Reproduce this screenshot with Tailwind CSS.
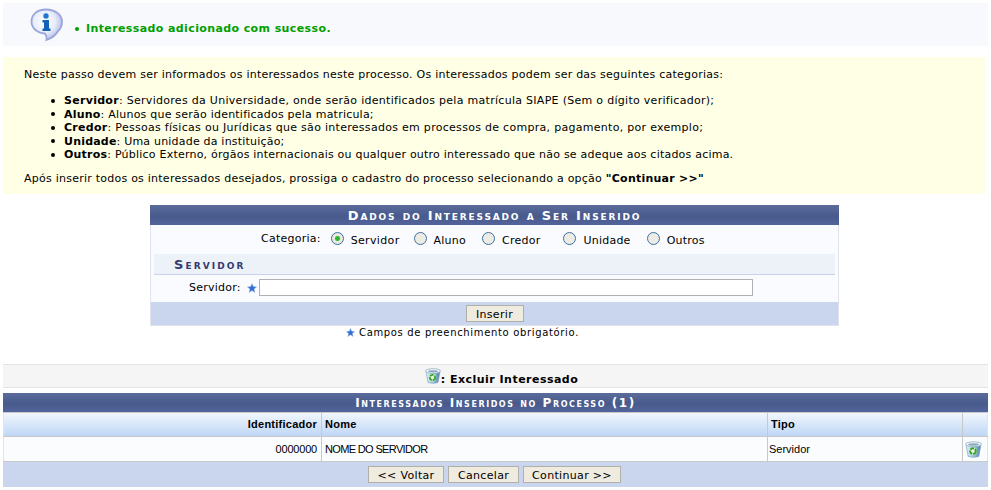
<!DOCTYPE html>
<html lang="pt-BR">
<head>
  <meta charset="UTF-8" />
  <title>Dados do Interessado</title>
  <script src="https://cdn.jsdelivr.net/npm/@tailwindcss/browser@4"></script>
</head>
<body class="bg-white text-black font-['DejaVu_Sans',sans-serif] text-[11px] leading-[13px] tracking-[.24px] overflow-hidden">
  <svg width="0" height="0" class="absolute">
    <defs>
      <symbol id="star" viewBox="0 0 10 10">
        <path d="M5 .5 6.3 3.6 9.6 3.9 7.1 6.1 7.9 9.4 5 7.6 2.1 9.4 2.9 6.1.4 3.9 3.7 3.6Z" fill="#2f6fd0" stroke="#9db8e0" stroke-width=".5"/>
      </symbol>
      <linearGradient id="binBody" x1="0" x2="1" y1="0" y2="0">
        <stop offset="0" stop-color="#e6f3fa"/><stop offset=".55" stop-color="#93c4e0"/><stop offset="1" stop-color="#4a7fa6"/>
      </linearGradient>
      <symbol id="bin" viewBox="0 0 16 16">
        <path d="M1 3.500 3 14.500Q8 16.200 13 14.500L15 3.500Z" fill="url(#binBody)" stroke="#7d9fb6" stroke-width=".6"/>
        <ellipse cx="8" cy="3" rx="7.500" ry="2.300" fill="#f0f7fb" stroke="#86a8be" stroke-width=".7"/>
        <ellipse cx="8" cy="3.300" rx="5" ry="1.100" fill="#8fa9bb"/>
        <circle cx="7.500" cy="9.500" r="3.700" fill="#e4f3e0"/>
        <circle cx="7.500" cy="9.500" r="2.700" fill="none" stroke="#35a324" stroke-width="1.800" stroke-dasharray="4 .8"/>
      </symbol>
    </defs>
  </svg>

  <div class="pt-[3px] pl-[3px] w-[988px]">
    <!-- mensagem de sucesso -->
    <div class="flex h-[43px] w-[985px] bg-[#f8f9fd] pl-[27px] pt-[5px]">
      <svg width="34" height="34" viewBox="0 0 34 34" class="shrink-0">
        <defs>
          <radialGradient id="bubble" cx=".42" cy=".4" r=".6">
            <stop offset="0" stop-color="#ffffff"/><stop offset=".6" stop-color="#e9ecfa"/><stop offset="1" stop-color="#b4bcea"/>
          </radialGradient>
        </defs>
        <path d="M16 1.500C7 1.500 1.500 6.500 1.500 13.500 1.500 20 7 25 15 25.500 16.500 27.500 17 29.500 16.500 32 22 30 26 27 28 23 30.500 21 32 17 32 13.500 32 6.500 25 1.500 16 1.500Z" fill="url(#bubble)" stroke="#9aa5da" stroke-width="1.800"/>
        <circle cx="16" cy="8" r="2.700" fill="#1f78cf"/>
        <path d="M12.500 12h6.500v8.500h1.500v2.500h-8v-2.500h1.500v-6h-1.500Z" fill="#1462b8"/>
      </svg>
      <ul class="ml-[11px] mt-[14px] font-bold text-[#00a000] tracking-[.39px]">
        <li class="flex items-center"><span class="mr-[7px] size-[4px] rounded-full bg-[#00a000]"></span>Interessado adicionado com sucesso.</li>
      </ul>
    </div>

    <!-- instrucoes -->
    <div class="mt-[11px] h-[137px] w-[983px] bg-[#ffffe6] pl-[21px] pt-[11px]">
      <p>Neste passo devem ser informados os interessados neste processo. Os interessados podem ser das seguintes categorias:</p>
      <ul class="mt-[13px] ml-[27px] flex flex-col leading-[13.5px]">
        <li class="flex items-center tracking-[.29px]"><span class="mr-[9px] size-[4px] rounded-full bg-black"></span><span><b>Servidor</b>: Servidores da Universidade, onde serão identificados pela matrícula SIAPE (Sem o dígito verificador);</span></li>
        <li class="flex items-center tracking-[.22px]"><span class="mr-[9px] size-[4px] rounded-full bg-black"></span><span><b>Aluno</b>: Alunos que serão identificados pela matricula;</span></li>
        <li class="flex items-center tracking-[.29px]"><span class="mr-[9px] size-[4px] rounded-full bg-black"></span><span><b>Credor</b>: Pessoas físicas ou Jurídicas que são interessados em processos de compra, pagamento, por exemplo;</span></li>
        <li class="flex items-center tracking-[.2px]"><span class="mr-[9px] size-[4px] rounded-full bg-black"></span><span><b>Unidade</b>: Uma unidade da instituição;</span></li>
        <li class="flex items-center tracking-[.22px]"><span class="mr-[9px] size-[4px] rounded-full bg-black"></span><span><b>Outros</b>: Público Externo, órgãos internacionais ou qualquer outro interessado que não se adeque aos citados acima.</span></li>
      </ul>
      <p class="mt-[10px]">Após inserir todos os interessados desejados, prossiga o cadastro do processo selecionando a opção <b>"Continuar &gt;&gt;"</b></p>
    </div>

    <!-- formulario -->
    <div class="ml-[147px] mt-[11px] w-[689px] border-x border-b border-[#dfe3ee]">
      <div class="-mx-px h-[20px] bg-[linear-gradient(#5b6c9c,#485a8c_55%,#52649a)] text-center text-[13px] leading-[21px] font-bold text-white tracking-[1.83px] [font-variant:small-caps]">Dados do Interessado a Ser Inserido</div>
      <div class="bg-[#f9fbfe]">
        <div class="flex h-[29px] items-center pl-[110px]">
          <span class="mr-[10px] -mt-[2px]">Categoria:</span>
          <span class="size-[13px] rounded-full border border-[#3f6f9f] bg-[radial-gradient(circle,#2eb82e_0_2px,#e8e8e0_3px)] -mt-[2px]"></span>
          <span class="ml-[7px] mr-[14px] mt-[2px] tracking-[.35px]">Servidor</span>
          <span class="size-[13px] rounded-full border border-[#3f6f9f] bg-[#ecece4] -mt-[2px]"></span>
          <span class="ml-[7px] mr-[16px] mt-[2px]">Aluno</span>
          <span class="size-[13px] rounded-full border border-[#3f6f9f] bg-[#ecece4] -mt-[2px]"></span>
          <span class="ml-[7px] mr-[23px] mt-[2px]">Credor</span>
          <span class="size-[13px] rounded-full border border-[#3f6f9f] bg-[#ecece4] -mt-[2px]"></span>
          <span class="ml-[7px] mr-[16px] mt-[2px]">Unidade</span>
          <span class="size-[13px] rounded-full border border-[#3f6f9f] bg-[#ecece4] -mt-[2px]"></span>
          <span class="ml-[7px] mt-[2px]">Outros</span>
        </div>
        <div class="mx-[3px] h-[21px] border-b border-[#c8d2e8] bg-[#edf1f8] pl-[20px] pt-[1px] text-[13px] leading-[20px] font-bold text-[#333a70] tracking-[2.1px] [font-variant:small-caps]">Servidor</div>
        <div class="flex h-[27px] items-center pl-[38px] pb-[2px]">
          <span>Servidor:</span>
          <svg class="ml-[6px] mr-[2px]" width="10" height="10"><use href="#star"/></svg>
          <input type="text" class="h-[17px] w-[494px] border border-[#b0b0b0] bg-white" />
        </div>
      </div>
      <div class="flex h-[23px] items-center justify-center bg-[#cad6ee]">
        <button class="h-[17px] w-[58px] border border-[#b0b0a8] bg-[#efebde] pt-[1px] text-center text-[11px] leading-[15px] tracking-[.33px]">Inserir</button>
      </div>
    </div>
    <div class="ml-[343px] flex h-[13px] items-center text-[10px]">
      <svg class="mr-[4px]" width="9" height="9"><use href="#star"/></svg>
      <span class="tracking-[.66px]">Campos de preenchimento obrigatório.</span>
    </div>

    <!-- legenda -->
    <div class="mt-[25px] flex h-[24px] w-[985px] items-center justify-center border-y border-[#e3e3e3] bg-[#f5f5f5] pl-[12px] font-bold tracking-[.48px]">
      <svg width="16" height="16"><use href="#bin"/></svg><span class="mt-[6px]">: Excluir Interessado</span>
    </div>

    <!-- lista de interessados -->
    <div class="mt-[5px] w-[985px]">
      <div class="h-[19px] bg-[linear-gradient(#5b6c9c,#485a8c_55%,#52649a)] text-center text-[12px] leading-[20px] font-bold text-white tracking-[1.55px] [font-variant:small-caps]">Interessados Inseridos no Processo (1)</div>
      <table class="w-full table-fixed border-collapse font-['Liberation_Sans',sans-serif] text-[11px] tracking-normal">
        <colgroup><col class="w-[318px]"/><col class="w-[446px]"/><col class="w-[195px]"/><col/></colgroup>
        <thead>
          <tr class="h-[24px] bg-[linear-gradient(#f2f7fd,#bcd5f5)] font-bold tracking-[.25px]">
            <th class="border border-[#c8c8c8] border-l-[#dfe3ee] pr-[4px] text-right">Identificador</th>
            <th class="border border-[#c8c8c8] pl-[3px] text-left">Nome</th>
            <th class="border border-[#c8c8c8] pl-[3px] text-left">Tipo</th>
            <th class="border border-[#c8c8c8] border-r-[#dfe3ee]"></th>
          </tr>
        </thead>
        <tbody>
          <tr class="h-[25px] bg-[#fbfcfe]">
            <td class="border border-[#c8c8c8] border-l-[#dfe3ee] pr-[4px] text-right tracking-[-.2px]">0000000</td>
            <td class="border border-[#c8c8c8] pl-[3px] tracking-[-.65px]">NOME DO SERVIDOR</td>
            <td class="border border-[#c8c8c8] pl-[1px]">Servidor</td>
            <td class="border border-[#c8c8c8] border-r-[#dfe3ee]"><svg class="ml-[2px]" width="17" height="17"><use href="#bin"/></svg></td>
          </tr>
        </tbody>
      </table>
      <div class="flex h-[25px] items-center justify-center gap-[4px] bg-[#cad6ee] pr-[2px] pb-[1px]">
        <button class="h-[17px] w-[76px] border border-[#b0b0a8] bg-[#efebde] pt-[1px] text-[11px] leading-[15px] tracking-[.33px]">&lt;&lt; Voltar</button>
        <button class="h-[17px] w-[71px] border border-[#b0b0a8] bg-[#efebde] pt-[1px] text-[11px] leading-[15px] tracking-[.33px]">Cancelar</button>
        <button class="h-[17px] w-[98px] border border-[#b0b0a8] bg-[#efebde] pt-[1px] text-[11px] leading-[15px] tracking-[.33px]">Continuar &gt;&gt;</button>
      </div>
    </div>
  </div>
</body>
</html>
